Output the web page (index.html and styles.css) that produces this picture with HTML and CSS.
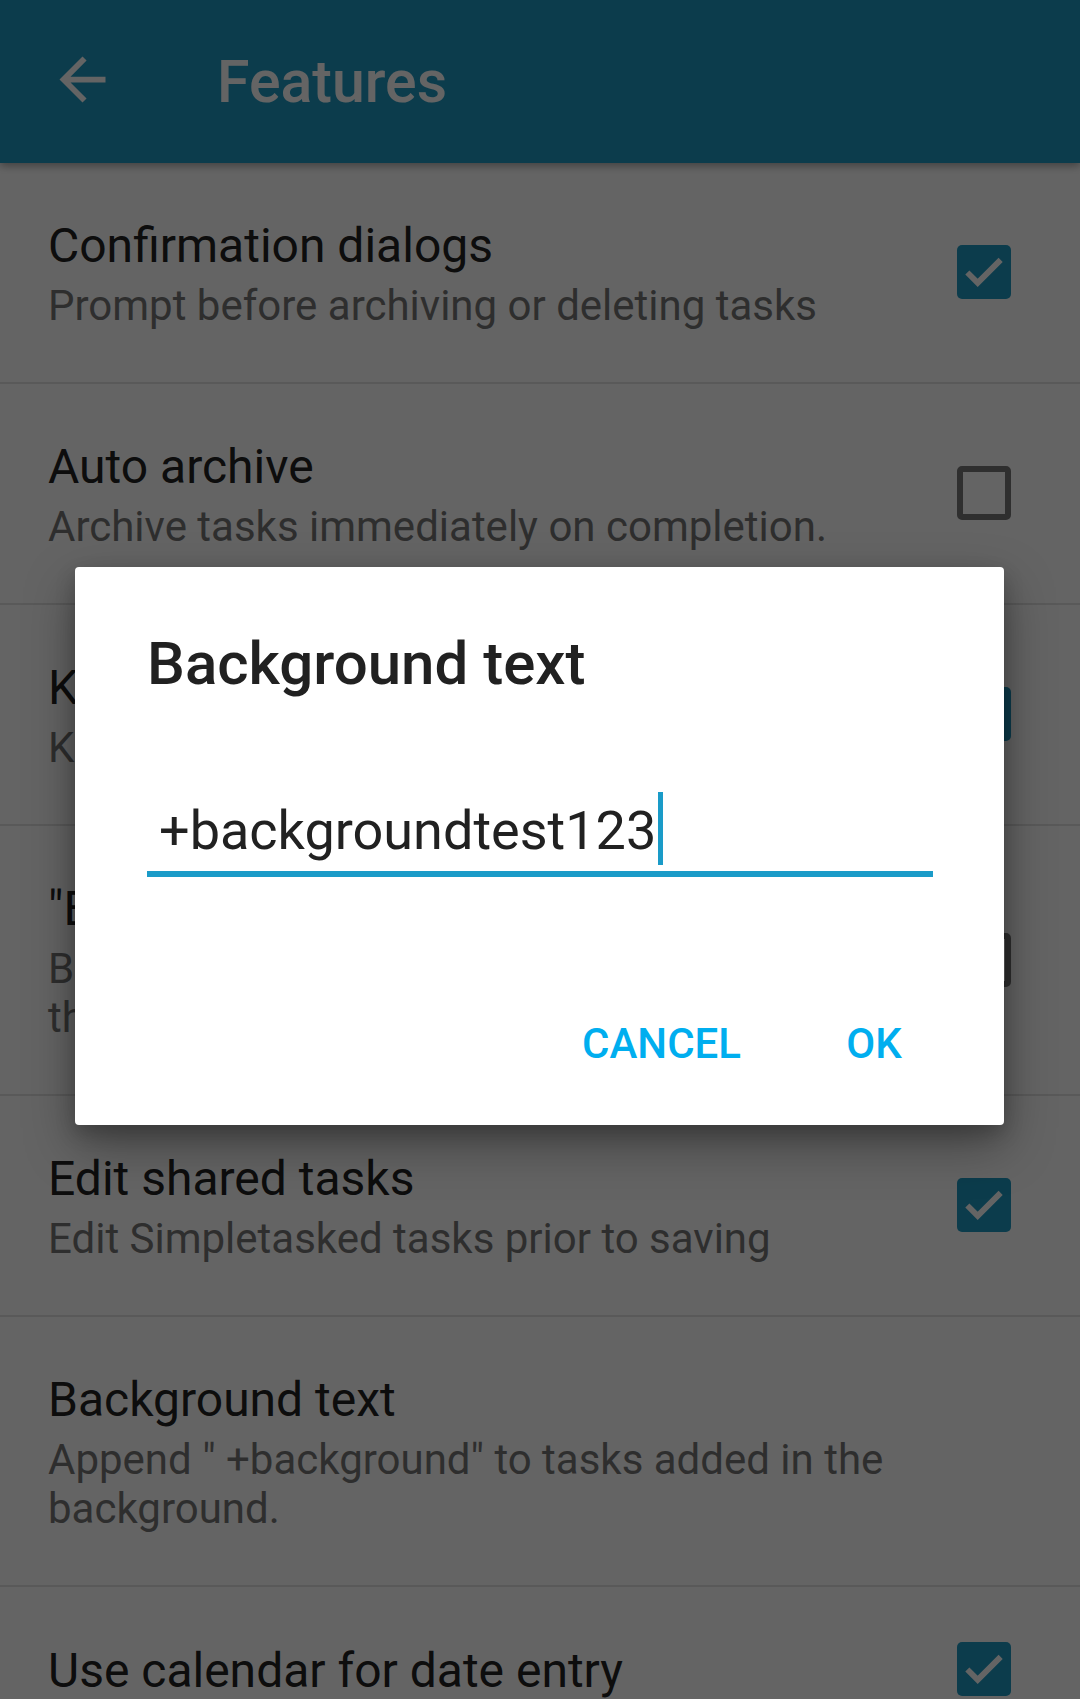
FILE: index.html
```html
<!DOCTYPE html>
<html lang="en">
<head>
<meta charset="utf-8">
<title>Features</title>
<link rel="stylesheet" href="styles.css">
</head>
<body>
<div class="screen">
  <header class="toolbar">
    <svg class="back" viewBox="0 0 24 24" aria-hidden="true"><path d="M20 11H7.83l5.59-5.59L12 4l-8 8 8 8 1.41-1.41L7.83 13H20v-2z"/></svg>
    <h1 class="toolbar-title">Features</h1>
  </header>

  <ul class="prefs">
    <li class="pref">
      <div class="pref-text">
        <div class="pref-title">Confirmation dialogs</div>
        <div class="pref-summary">Prompt before archiving or deleting tasks</div>
      </div>
      <span class="check on"><svg viewBox="0 0 24 24"><path d="M4.6 12.2l4.6 4.6 10.2-10.2"/></svg></span>
    </li>
    <li class="pref">
      <div class="pref-text">
        <div class="pref-title">Auto archive</div>
        <div class="pref-summary">Archive tasks immediately on completion.</div>
      </div>
      <span class="check"></span>
    </li>
    <li class="pref">
      <div class="pref-text">
        <div class="pref-title">Keep priority</div>
        <div class="pref-summary">Keep priority when completing a task</div>
      </div>
      <span class="check on"><svg viewBox="0 0 24 24"><path d="M4.6 12.2l4.6 4.6 10.2-10.2"/></svg></span>
    </li>
    <li class="pref">
      <div class="pref-text">
        <div class="pref-title">"Enter" saves task</div>
        <div class="pref-summary">Both the save button and the enter key<br>the current task</div>
      </div>
      <span class="check"></span>
    </li>
    <li class="pref">
      <div class="pref-text">
        <div class="pref-title">Edit shared tasks</div>
        <div class="pref-summary">Edit Simpletasked tasks prior to saving</div>
      </div>
      <span class="check on"><svg viewBox="0 0 24 24"><path d="M4.6 12.2l4.6 4.6 10.2-10.2"/></svg></span>
    </li>
    <li class="pref">
      <div class="pref-text">
        <div class="pref-title">Background text</div>
        <div class="pref-summary">Append " +background" to tasks added in the<br>background.</div>
      </div>
    </li>
    <li class="pref">
      <div class="pref-text">
        <div class="pref-title">Use calendar for date entry</div>
      </div>
      <span class="check on"><svg viewBox="0 0 24 24"><path d="M4.6 12.2l4.6 4.6 10.2-10.2"/></svg></span>
    </li>
  </ul>

  <div class="scrim"></div>

  <div class="dialog" role="dialog">
    <h2 class="dialog-title">Background text</h2>
    <div class="field"><span class="field-text">+backgroundtest123</span><span class="cursor"></span></div>
    <div class="actions">
      <span class="btn">CANCEL</span>
      <span class="btn">OK</span>
    </div>
  </div>
</div>
</body>
</html>
```

FILE: styles.css
```css
* { box-sizing: border-box; }

html, body {
  margin: 0;
  padding: 0;
  background: #ffffff;
}

body {
  font-family: Roboto, "Noto Sans", "Liberation Sans", sans-serif;
}

.screen {
  position: relative;
  width: 1080px;
  height: 1699px;
  overflow: hidden;
  background: #ffffff;
}

.toolbar {
  position: relative;
  z-index: 1;
  height: 163px;
  background: #1f9ac3;
  display: flex;
  align-items: center;
  padding-left: 48px;
  box-shadow: 0 3px 8px rgba(0, 0, 0, 0.35);
}

.back {
  width: 69px;
  height: 69px;
  fill: #ffffff;
  flex: none;
  margin-top: -4px;
}

.toolbar-title {
  margin: 0 0 0 100px;
  font-size: 59px;
  line-height: 69px;
  font-weight: 500;
  color: #ffffff;
}

.prefs {
  list-style: none;
  margin: 0;
  padding: 0;
}

.pref {
  display: flex;
  align-items: center;
  padding: 55px 69px 52px 48px;
  border-bottom: 2px solid #e4e4e4;
}

.pref-text {
  flex: 1;
  min-width: 0;
}

.pref-title {
  font-size: 48px;
  line-height: 56px;
  color: #232323;
  white-space: nowrap;
}

.pref-summary {
  margin-top: 7px;
  font-size: 42px;
  line-height: 49px;
  color: #777777;
  white-space: nowrap;
}

.check {
  flex: none;
  width: 54px;
  height: 54px;
  margin-bottom: 4px;
  border: 6px solid #787878;
  border-radius: 5px;
  display: flex;
  align-items: center;
  justify-content: center;
}

.check.on {
  background: #1f9ac3;
  border: none;
}

.check svg {
  width: 54px;
  height: 54px;
  fill: none;
  stroke: #ffffff;
  stroke-width: 2.6;
}

.scrim {
  position: absolute;
  inset: 0;
  z-index: 2;
  background: rgba(0, 0, 0, 0.608);
}

.dialog {
  position: absolute;
  z-index: 3;
  left: 75px;
  top: 567px;
  width: 929px;
  height: 558px;
  background: #ffffff;
  border-radius: 4px;
  padding: 62px 71px 0 72px;
  box-shadow: 0 20px 50px rgba(0, 0, 0, 0.35), 0 8px 20px rgba(0, 0, 0, 0.2);
}

.dialog-title {
  margin: 0;
  font-size: 60px;
  line-height: 70px;
  font-weight: 500;
  color: #212121;
}

.field {
  margin-top: 93px;
  padding: 0 0 6px 12px;
  border-bottom: 6px solid #1a9bc8;
  font-size: 54px;
  line-height: 63px;
  color: #212121;
  white-space: nowrap;
}

.cursor {
  display: inline-block;
  width: 5px;
  height: 73px;
  margin-left: 2px;
  background: #1a9bc8;
  vertical-align: -16px;
}

.actions {
  display: flex;
  justify-content: flex-end;
  gap: 17px;
  margin: 142px -33px 0 0;
}

.btn {
  min-width: 184px;
  padding: 0 24px;
  text-align: center;
  font-size: 42px;
  line-height: 49px;
  font-weight: 500;
  color: #00aeef;
}
```
